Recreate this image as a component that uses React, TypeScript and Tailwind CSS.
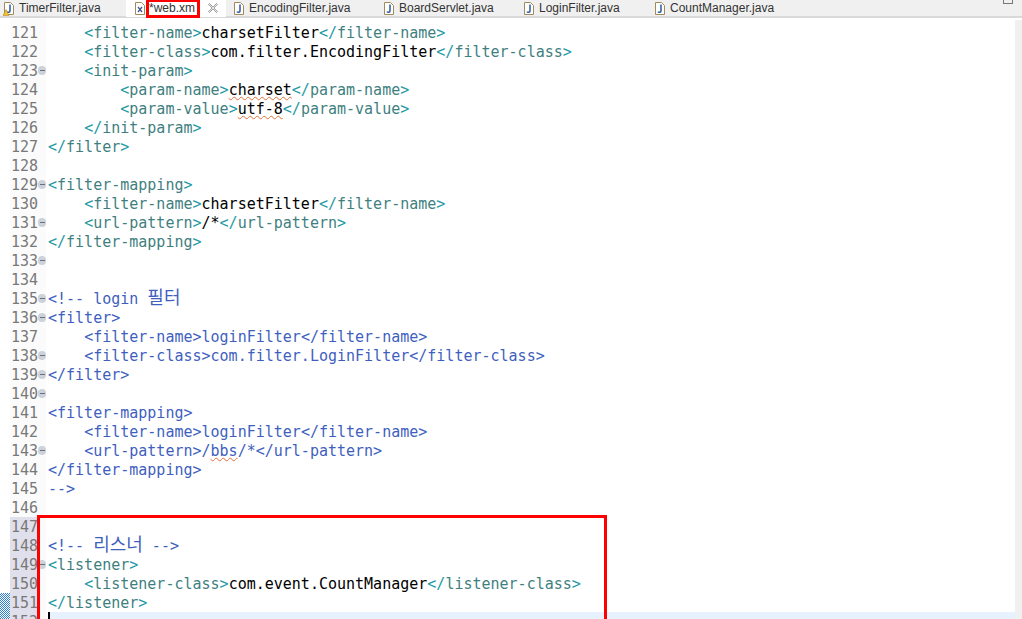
import React from 'react';

type Seg = { t: string; c: 'tag' | 'br' | 'txt' | 'cm' | 'ko'; squiggle?: boolean };
type Line = { n: number; indent?: number; fold?: boolean; segs?: Seg[] };

const tag = (name: string, close?: boolean): Seg[] => [
  { t: close ? '</' : '<', c: 'br' },
  { t: name, c: 'tag' },
  { t: '>', c: 'br' },
];
const cmTag = (name: string, close?: boolean): Seg[] => [{ t: `${close ? '</' : '<'}${name}>`, c: 'cm' }];
const txt = (t: string, squiggle?: boolean): Seg => ({ t, c: 'txt', squiggle });
const cm = (t: string): Seg => ({ t, c: 'cm' });
const ko = (t: string): Seg => ({ t, c: 'ko' });

const lines: Line[] = [
  { n: 121, indent: 1, segs: [...tag('filter-name'), txt('charsetFilter'), ...tag('filter-name', true)] },
  { n: 122, indent: 1, segs: [...tag('filter-class'), txt('com.filter.EncodingFilter'), ...tag('filter-class', true)] },
  { n: 123, indent: 1, fold: true, segs: tag('init-param') },
  { n: 124, indent: 2, segs: [...tag('param-name'), txt('charset', true), ...tag('param-name', true)] },
  { n: 125, indent: 2, segs: [...tag('param-value'), txt('utf-8', true), ...tag('param-value', true)] },
  { n: 126, indent: 1, segs: tag('init-param', true) },
  { n: 127, segs: tag('filter', true) },
  { n: 128 },
  { n: 129, fold: true, segs: tag('filter-mapping') },
  { n: 130, indent: 1, segs: [...tag('filter-name'), txt('charsetFilter'), ...tag('filter-name', true)] },
  { n: 131, indent: 1, fold: true, segs: [...tag('url-pattern'), txt('/*'), ...tag('url-pattern', true)] },
  { n: 132, segs: tag('filter-mapping', true) },
  { n: 133, fold: true },
  { n: 134 },
  { n: 135, fold: true, segs: [cm('<!-- login '), ko('필터')] },
  { n: 136, fold: true, segs: cmTag('filter') },
  { n: 137, indent: 1, segs: [...cmTag('filter-name'), cm('loginFilter'), ...cmTag('filter-name', true)] },
  { n: 138, indent: 1, fold: true, segs: [...cmTag('filter-class'), cm('com.filter.LoginFilter'), ...cmTag('filter-class', true)] },
  { n: 139, fold: true, segs: cmTag('filter', true) },
  { n: 140, fold: true },
  { n: 141, segs: cmTag('filter-mapping') },
  { n: 142, indent: 1, segs: [...cmTag('filter-name'), cm('loginFilter'), ...cmTag('filter-name', true)] },
  { n: 143, indent: 1, fold: true, segs: [...cmTag('url-pattern'), cm('/'), { t: 'bbs', c: 'cm', squiggle: true }, cm('/*'), ...cmTag('url-pattern', true)] },
  { n: 144, segs: cmTag('filter-mapping', true) },
  { n: 145, segs: [cm('-->')] },
  { n: 146 },
  { n: 147 },
  { n: 148, segs: [cm('<!-- '), ko('리스너'), cm(' -->')] },
  { n: 149, fold: true, segs: tag('listener') },
  { n: 150, indent: 1, segs: [...tag('listener-class'), txt('com.event.CountManager'), ...tag('listener-class', true)] },
  { n: 151, segs: tag('listener', true) },
  { n: 152 },
];

const segColor: Record<Seg['c'], string> = {
  tag: 'text-[#3f7f7f]',
  br: 'text-[#1f9aa5]',
  txt: 'text-black',
  cm: 'text-[#3f5fbf]',
  ko: "text-[#3f5fbf] font-['Noto_Sans_CJK_KR',sans-serif] text-[18px] leading-[0px]",
};

const tabs = [
  { name: 'TimerFilter.java', icon: 'J', w: 'w-[126px]', pl: 'pl-[3px]', warn: true },
  { name: '*web.xml', icon: 'X', w: 'w-[100px]', pl: 'pl-[8px]', active: true },
  { name: 'EncodingFilter.java', icon: 'J', w: 'w-[150px]', pl: 'pl-[7px]' },
  { name: 'BoardServlet.java', icon: 'J', w: 'w-[140px]', pl: 'pl-[7px]' },
  { name: 'LoginFilter.java', icon: 'J', w: 'w-[131px]', pl: 'pl-[7px]' },
  { name: 'CountManager.java', icon: 'J', w: 'w-[150px]', pl: 'pl-[7px]' },
];

const FileIcon = ({ kind, warn }: { kind: string; warn?: boolean }) => (
  <svg width="12" height="15" viewBox="0 0 12 15" className="shrink-0">
    <path d="M1.5 1.5h6l3 3v9h-9z" fill="#fff" stroke="#a08a5c" />
    {kind === 'J' ? (
      <path d="M7 3.5v6.500c0 1.600-2.400 1.600-3 .6" fill="none" stroke="#2a5a9a" strokeWidth="1.500" />
    ) : (
      <path d="M4 6l4 5M8 6l-4 5" fill="none" stroke="#44598a" strokeWidth="1.300" />
    )}
    {warn && <path d="M0 14.500l3-6 3 6z" fill="#f2c230" stroke="#a87a10" strokeWidth="0.500" />}
  </svg>
);

const CloseIcon = () => (
  <svg width="12" height="12" viewBox="0 0 12 12" className="ml-[8px] shrink-0">
    <path d="M1.500 2.500l1-1L6 5l3.500-3.500 1 1L7 6l3.500 3.500-1 1L6 7l-3.500 3.500-1-1L5 6z" fill="#e8e8e8" stroke="#8c8c8c" strokeWidth="0.800" />
  </svg>
);

const GutterRow = ({ l }: { l: Line }) => (
  <div className="flex h-[19px] shrink-0 items-center">
    <div className={`h-[19px] w-[27px] shrink-0 pl-[1px] leading-[21px] text-[#787878] ${l.n >= 147 ? 'bg-[#e0e0ec]' : ''}`}>
      {l.n}
    </div>
    {l.fold && (
      <span className="ml-px flex h-[9px] w-[9px] items-center justify-center rounded-full bg-[#cdd1d8]">
        <span className="h-px w-[5px] bg-[#6a7080]" />
      </span>
    )}
  </div>
);

const CodeRow = ({ l }: { l: Line }) => (
  <div className={`h-[19px] shrink-0 whitespace-pre leading-[21px] ${l.n === 152 ? 'bg-[#e8f2fe]' : ''}`}>
    {l.n === 152 && <div className="h-full w-[2px] bg-black" />}
    {l.indent ? <span>{'    '.repeat(l.indent)}</span> : null}
    {l.segs?.map((s, i) => (
      <span
        key={i}
        className={`${segColor[s.c]} ${s.squiggle ? 'underline decoration-wavy decoration-[#e0703a] decoration-1' : ''}`}
      >
        {s.t}
      </span>
    ))}
  </div>
);

export default function App() {
  return (
    <div className="flex h-[619px] w-[1022px] flex-col overflow-hidden bg-white">
      <div className="relative flex h-[18px] shrink-0 items-center border-b-2 border-[#d9d9d9] bg-[#f0f0f0] font-['Liberation_Sans',sans-serif] text-[12px] text-[#333]">
        {tabs.map((t) => (
          <div
            key={t.name}
            className={`flex h-[18px] shrink-0 items-center gap-[4px] ${t.w} ${t.pl} ${t.active ? 'bg-white' : ''}`}
          >
            <FileIcon kind={t.icon} warn={t.warn} />
            <span className={t.active ? 'ml-[-1px] w-[46px] overflow-hidden whitespace-nowrap' : 'whitespace-nowrap'}>{t.name}</span>
            {t.active && <CloseIcon />}
          </div>
        ))}
        <div className="mr-[9px] ml-auto h-[4px] w-[10px] self-start border border-t-0 border-[#777]" />
        <div className="absolute left-[146px] top-0 h-[18px] w-[54px] border-[3px] border-t-2 border-[#f00]" />
      </div>
      <div className="relative flex min-h-0 flex-1 overflow-hidden font-['DejaVu_Sans_Mono',monospace] text-[15px] leading-[19px]">
        <div className="flex w-[10px] shrink-0 flex-col justify-end">
          <div className="h-[26px] bg-[repeating-conic-gradient(#2f7fd6_0_25%,#ffffff_0_50%)] bg-[length:2px_2px]" />
        </div>
        <div className="flex w-[36px] shrink-0 flex-col bg-[#fbfbfb] pt-[5px]">
          {lines.map((l) => (
            <GutterRow key={l.n} l={l} />
          ))}
        </div>
        <div className="flex min-w-0 flex-1 flex-col pl-[2px] pt-[5px]">
          {lines.map((l) => (
            <CodeRow key={l.n} l={l} />
          ))}
        </div>
        <div className="mt-[2px] w-[7px] shrink-0 bg-[#f0f0f0]" />
        <div className="absolute left-[37px] top-[497px] h-[110px] w-[570px] border-[3px] border-[#f00]" />
      </div>
    </div>
  );
}
